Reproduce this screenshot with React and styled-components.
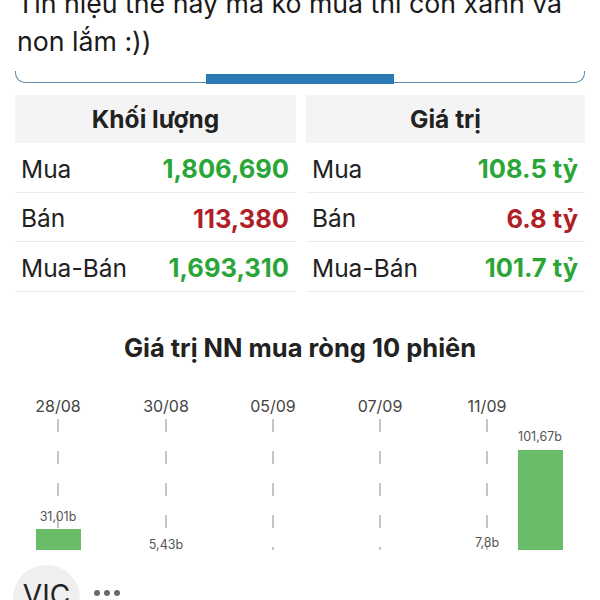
import React from "react";
import styled, { createGlobalStyle } from "styled-components";

const Global = createGlobalStyle`
  html, body { margin: 0; padding: 0; background: #fff; }
  body { font-family: Inter, "Noto Sans", "Liberation Sans", sans-serif; color: #1c1c1c; overflow: hidden; }
`;

const Page = styled.div`
  width: 600px;
  height: 600px;
  overflow: hidden;
  display: flex;
  flex-direction: column;
`;

const PostText = styled.p`
  margin: -16px 0 0;
  padding: 0 17px;
  font-size: 26.7px;
  line-height: 38px;
  color: #1a1a1a;
`;

const CardTail = styled.div`
  margin: 11px 15px 0;
  height: 11px;
  flex-shrink: 0;
  border: 1.5px solid #5d8aa8;
  border-top: none;
  border-radius: 0 0 10px 10px;
  display: flex;
  justify-content: center;
  align-items: flex-end;
`;

const Indicator = styled.div`
  width: 188px;
  height: 10px;
  margin-bottom: -1.5px;
  background: #2b79b5;
`;

const StatsGrid = styled.div`
  display: grid;
  grid-template-columns: 281px 279px;
  column-gap: 10px;
  padding: 0 15px;
  margin-top: 12px;
`;

const Column = styled.div`
  display: flex;
  flex-direction: column;
`;

const Header = styled.div`
  height: 48px;
  background: #f4f4f4;
  display: flex;
  align-items: center;
  justify-content: center;
  font-weight: 700;
  font-size: 24.5px;
  color: #222;
`;

const Row = styled.div`
  height: 49.5px;
  box-sizing: border-box;
  padding: 3px 7px 0 6px;
  border-bottom: 1px solid #ececec;
  display: flex;
  align-items: center;
  justify-content: space-between;
`;

const Label = styled.span`
  font-size: 24.5px;
  color: #222;
`;

const Value = styled.span`
  font-size: 25.5px;
  font-weight: 700;
  color: ${(p) => (p.$tone === "down" ? "#b01e28" : "#2aa638")};
`;

const ChartTitle = styled.h2`
  margin: 41px 0 0;
  text-align: center;
  font-size: 25.5px;
  line-height: 29px;
  font-weight: 700;
  color: #222;
`;

const ChartSvg = styled.svg`
  display: block;
  margin-top: 27px;
  flex-shrink: 0;
`;

const Footer = styled.div`
  display: flex;
  align-items: flex-start;
  gap: 14px;
  padding-left: 13px;
  margin-top: 10px;
  flex-shrink: 0;
`;

const Chip = styled.div`
  width: 67px;
  height: 67px;
  border-radius: 50%;
  background: #efefef;
  display: flex;
  justify-content: center;
  font-size: 28px;
  line-height: 34px;
  padding-top: 13px;
  box-sizing: border-box;
  color: #222;
  flex-shrink: 0;
`;

const Dots = styled.div`
  display: flex;
  gap: 4px;
  margin-top: 25px;
`;

const Dot = styled.span`
  width: 6px;
  height: 6px;
  border-radius: 50%;
  background: #6a6a6a;
`;

const stats = [
  {
    title: "Khối lượng",
    rows: [
      ["Mua", "1,806,690", "up"],
      ["Bán", "113,380", "down"],
      ["Mua-Bán", "1,693,310", "up"],
    ],
  },
  {
    title: "Giá trị",
    rows: [
      ["Mua", "108.5 tỷ", "up"],
      ["Bán", "6.8 tỷ", "down"],
      ["Mua-Bán", "101.7 tỷ", "up"],
    ],
  },
];

const dates = [
  { x: 58, t: "28/08" },
  { x: 166, t: "30/08" },
  { x: 273, t: "05/09" },
  { x: 380, t: "07/09" },
  { x: 487, t: "11/09" },
];

const bars = [
  { x: 36, y: 140, h: 21 },
  { x: 518, y: 61, h: 100 },
];

const valueLabels = [
  { x: 58, y: 132, t: "31,01b" },
  { x: 166, y: 160, t: "5,43b" },
  { x: 487, y: 158, t: "7,8b" },
  { x: 540, y: 52, t: "101,67b" },
];

function Chart() {
  return (
    <ChartSvg width="600" height="166" viewBox="0 0 600 166">
      {dates.map((d) => (
        <g key={d.t}>
          <text x={d.x} y="23" textAnchor="middle" fontSize="16" fill="#444" fontFamily="Inter, sans-serif">
            {d.t}
          </text>
          <line x1={d.x} x2={d.x} y1="30" y2="161" stroke="#b3b3b3" strokeWidth="1.5" strokeDasharray="13 19" />
        </g>
      ))}
      {bars.map((b) => (
        <rect key={b.x} x={b.x} y={b.y} width="45" height={b.h} fill="#6abd68" />
      ))}
      {valueLabels.map((l) => (
        <text key={l.t} x={l.x} y={l.y} textAnchor="middle" fontSize="12.5" fill="#555" fontFamily="Inter, sans-serif">
          {l.t}
        </text>
      ))}
    </ChartSvg>
  );
}

export default function App() {
  return (
    <Page>
      <Global />
      <PostText>
        Tín hiệu thế hay mà ko mua thì còn xanh và
        <br />
        non lắm :))
      </PostText>
      <CardTail>
        <Indicator />
      </CardTail>
      <StatsGrid>
        {stats.map((col) => (
          <Column key={col.title}>
            <Header>{col.title}</Header>
            {col.rows.map(([label, value, tone]) => (
              <Row key={label}>
                <Label>{label}</Label>
                <Value $tone={tone}>{value}</Value>
              </Row>
            ))}
          </Column>
        ))}
      </StatsGrid>
      <ChartTitle>Giá trị NN mua ròng 10 phiên</ChartTitle>
      <Chart />
      <Footer>
        <Chip>VIC</Chip>
        <Dots>
          <Dot />
          <Dot />
          <Dot />
        </Dots>
      </Footer>
    </Page>
  );
}
